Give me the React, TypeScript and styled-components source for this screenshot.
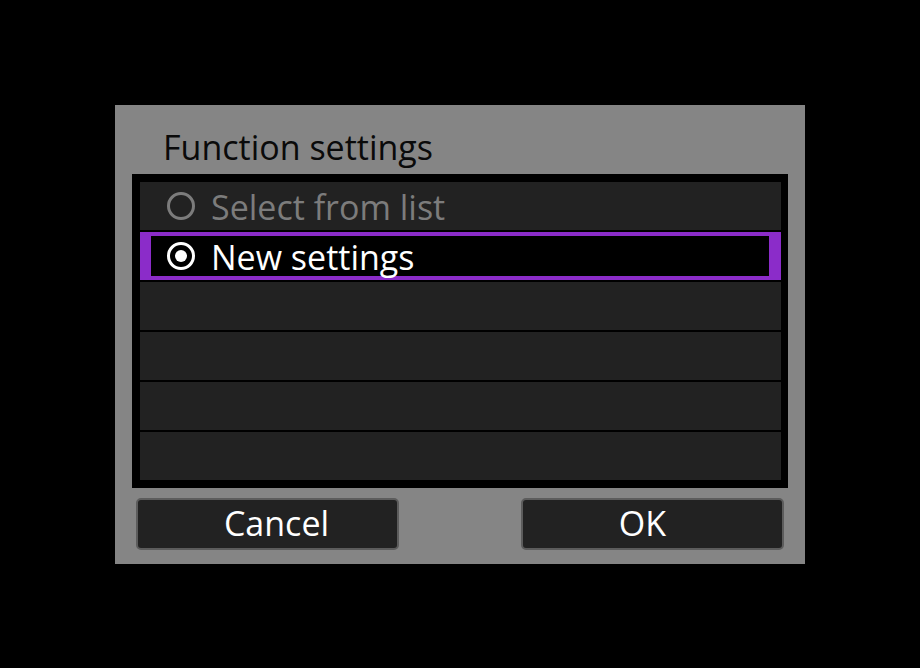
import styled, { createGlobalStyle } from "styled-components";

const GlobalStyle = createGlobalStyle`
  html, body {
    margin: 0;
    padding: 0;
    background: #000;
  }
  body {
    font-family: "Open Sans", "Noto Sans", sans-serif;
  }
`;

const options = [
  { label: "Select from list", disabled: true, selected: false },
  { label: "New settings", disabled: false, selected: true },
];
const EMPTY_ROWS = 4;

function Radio({ checked, dim }: { checked: boolean; dim: boolean }) {
  const color = dim ? "#7c7c7c" : "#fff";
  return (
    <svg width="30" height="30" viewBox="0 0 30 30">
      <circle cx="15" cy="15" r="12.5" fill="none" stroke={color} strokeWidth="3" />
      {checked && <circle cx="15" cy="15" r="6" fill={color} />}
    </svg>
  );
}

export default function App() {
  return (
    <>
      <GlobalStyle />
      <Screen>
        <Dialog>
          <Title>Function settings</Title>
          <ListFrame>
            {options.map((opt) => (
              <Row key={opt.label} $selected={opt.selected}>
                <Radio checked={opt.selected} dim={opt.disabled} />
                <Label $dim={opt.disabled}>{opt.label}</Label>
              </Row>
            ))}
            {Array.from({ length: EMPTY_ROWS }).map((_, i) => (
              <Row key={i} $selected={false} />
            ))}
          </ListFrame>
          <Buttons>
            <Button $shift={18}>Cancel</Button>
            <Button $shift={-20}>OK</Button>
          </Buttons>
        </Dialog>
      </Screen>
    </>
  );
}

const Screen = styled.div`
  width: 100vw;
  height: 100vh;
  display: flex;
  align-items: center;
  justify-content: center;
`;

const Dialog = styled.div`
  width: 690px;
  height: 459px;
  box-sizing: border-box;
  background: #858585;
  padding: 0 17px 14px;
  display: flex;
  flex-direction: column;
`;

const Title = styled.div`
  height: 69px;
  box-sizing: border-box;
  padding: 20px 0 0 31px;
  font-size: 34px;
  line-height: 44px;
  color: #0a0a0a;
`;

const ListFrame = styled.div`
  height: 314px;
  box-sizing: border-box;
  background: #000;
  padding: 8px 7px 8px 8px;
  display: flex;
  flex-direction: column;
  gap: 2px;
`;

const Row = styled.div<{ $selected: boolean }>`
  height: 48px;
  box-sizing: border-box;
  display: flex;
  align-items: center;
  gap: 15px;
  background: ${(p) => (p.$selected ? "#000" : "#222")};
  border: ${(p) => (p.$selected ? "4px solid #8b2cc9" : "none")};
  border-width: ${(p) => (p.$selected ? "4px 12px 4px 11px" : "0")};
  padding-left: ${(p) => (p.$selected ? "15px" : "26px")};
`;

const Label = styled.span<{ $dim: boolean }>`
  font-size: 34px;
  color: ${(p) => (p.$dim ? "#7c7c7c" : "#fff")};
  line-height: 1;
  padding-top: 2px;
`;

const Buttons = styled.div`
  margin-top: 10px;
  padding: 0 4px;
  display: flex;
  justify-content: space-between;
`;

const Button = styled.div<{ $shift: number }>`
  width: 263px;
  height: 52px;
  box-sizing: border-box;
  background: #222;
  border: 2px solid #5c5c5c;
  border-radius: 5px;
  color: #fff;
  font-size: 34px;
  display: flex;
  align-items: center;
  justify-content: center;
  padding-bottom: 1px;
  padding-left: ${(p) => (p.$shift > 0 ? p.$shift : 0)}px;
  padding-right: ${(p) => (p.$shift < 0 ? -p.$shift : 0)}px;
`;
